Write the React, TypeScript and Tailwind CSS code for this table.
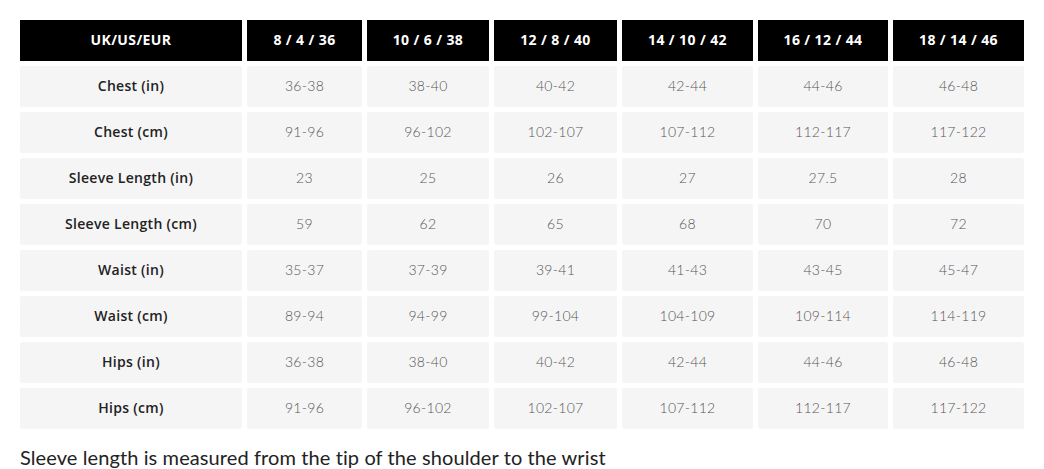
import React from "react";

const headers = ["UK/US/EUR", "8 / 4 / 36", "10 / 6 / 38", "12 / 8 / 40", "14 / 10 / 42", "16 / 12 / 44", "18 / 14 / 46"];
const rows: string[][] = [
  ["Chest (in)", "36-38", "38-40", "40-42", "42-44", "44-46", "46-48"],
  ["Chest (cm)", "91-96", "96-102", "102-107", "107-112", "112-117", "117-122"],
  ["Sleeve Length (in)", "23", "25", "26", "27", "27.5", "28"],
  ["Sleeve Length (cm)", "59", "62", "65", "68", "70", "72"],
  ["Waist (in)", "35-37", "37-39", "39-41", "41-43", "43-45", "45-47"],
  ["Waist (cm)", "89-94", "94-99", "99-104", "104-109", "109-114", "114-119"],
  ["Hips (in)", "36-38", "38-40", "40-42", "42-44", "44-46", "46-48"],
  ["Hips (cm)", "91-96", "96-102", "102-107", "107-112", "112-117", "117-122"],
];

export default function App() {
  return (
    <div className="w-[1044px] h-[469px] bg-white pt-[20px] pl-[20px] overflow-hidden">
      <div className="grid grid-cols-[222px_115px_122px_123px_131px_130px_131px] auto-rows-[41px] gap-[5px] w-[1004px]">
        {headers.map((h) => (
          <div
            key={h}
            className="bg-black text-white flex items-center justify-center pb-[3px] text-[14px] font-bold font-['Open_Sans',sans-serif] tracking-[0.4px]"
          >
            {h}
          </div>
        ))}
        {rows.map((r) =>
          r.map((c, i) => (
            <div
              key={r[0] + i}
              className={
                i === 0
                  ? "bg-[#f5f5f5] rounded-[2px] flex items-center justify-center pb-[3px] text-[14px] font-semibold text-[#222] tracking-[0.3px] font-['Open_Sans',sans-serif]"
                  : "bg-[#f5f5f5] rounded-[2px] flex items-center justify-center pb-[3px] text-[14px] font-light text-[#555] tracking-[0.3px] font-['Lato',sans-serif]"
              }
            >
              {c}
            </div>
          ))
        )}
      </div>
      <p className="mt-[16px] text-[20px] leading-[24px] tracking-[0.1px] text-[#222] font-['Lato',sans-serif]">
        Sleeve length is measured from the tip of the shoulder to the wrist
      </p>
    </div>
  );
}
